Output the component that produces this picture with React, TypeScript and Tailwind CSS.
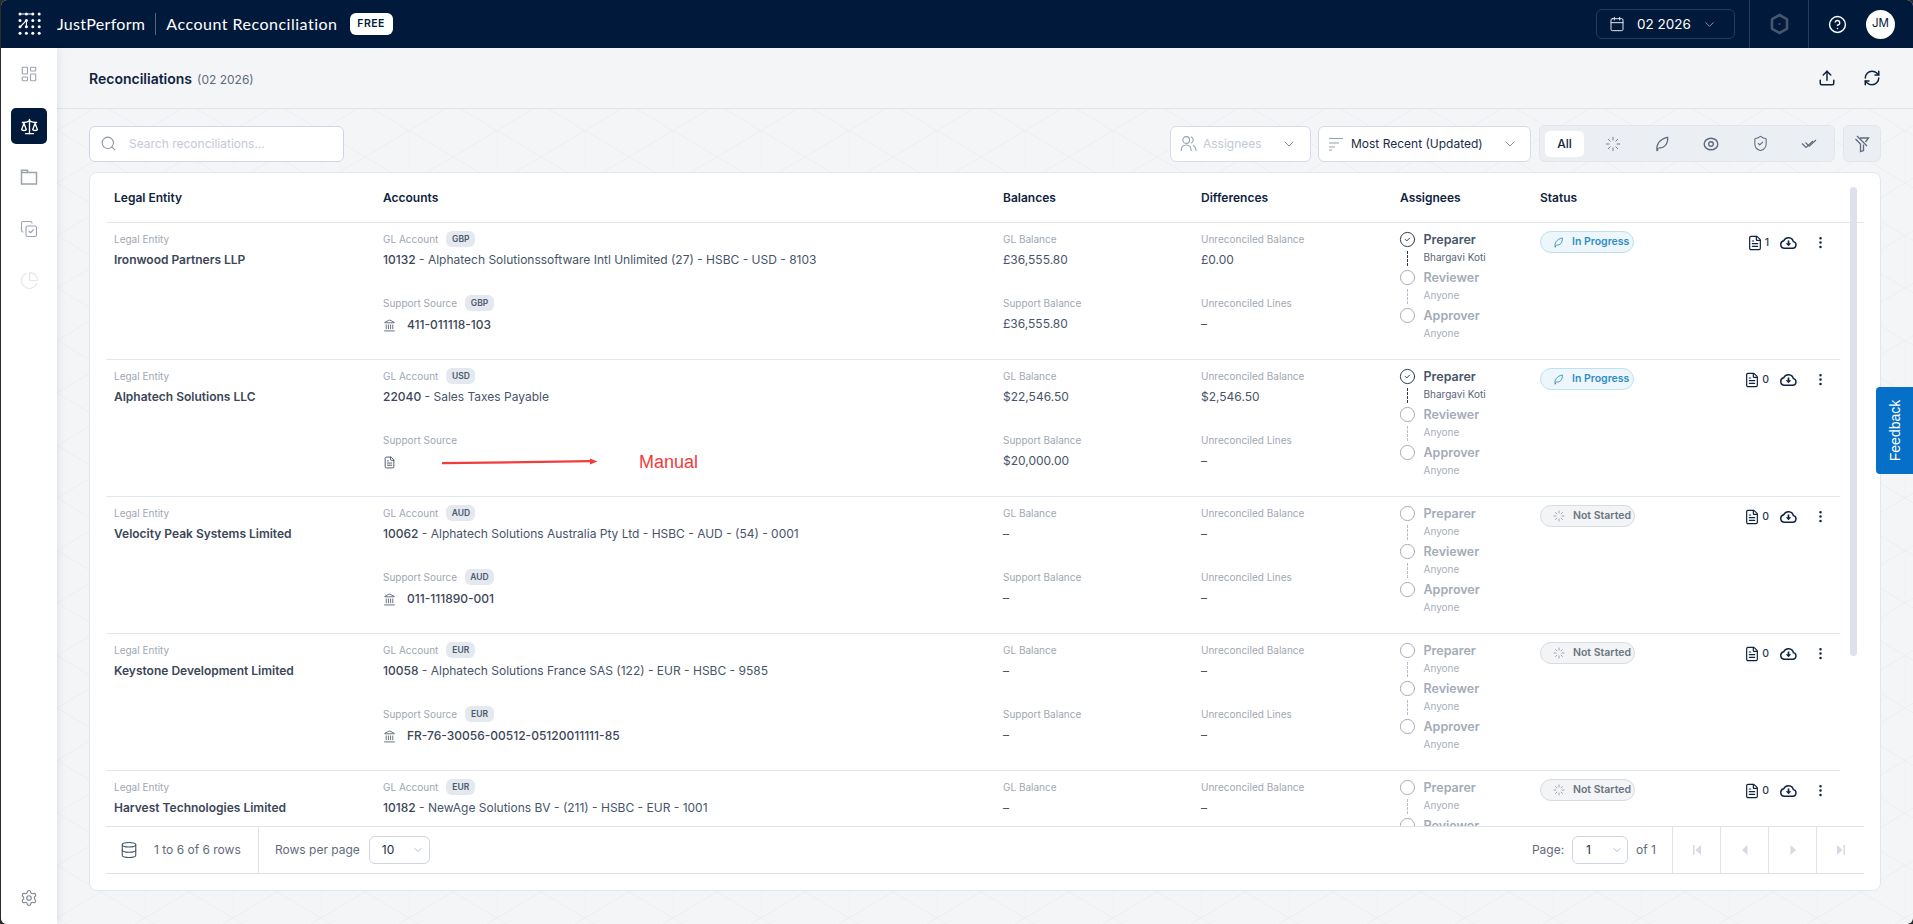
import {
  ChartPie,
  ChevronDown,
  CircleHelp,
  CopyCheck,
  Database,
  EllipsisVertical,
  FileText,
  Landmark,
  LayoutDashboard,
  Loader,
  RefreshCw,
  Scale,
  Search,
  Settings,
  ShieldCheck,
  Upload,
  Calendar,
  Circle,
  CircleCheck,
} from 'lucide-react';

const inter = { fontFamily: 'Inter, sans-serif' };

type Row = {
  entity: string;
  glCurrency: string;
  glCode: string;
  glName: string;
  sourceCurrency?: string;
  source?: string;
  glBalance: string;
  supportBalance: string;
  unreconciled: string;
  lines: string;
  started: boolean;
  docs: number;
};

const rows: Row[] = [
  {
    entity: 'Ironwood Partners LLP',
    glCurrency: 'GBP',
    glCode: '10132',
    glName: 'Alphatech Solutionssoftware Intl Unlimited (27) - HSBC - USD - 8103',
    sourceCurrency: 'GBP',
    source: '411-011118-103',
    glBalance: '£36,555.80',
    supportBalance: '£36,555.80',
    unreconciled: '£0.00',
    lines: '–',
    started: true,
    docs: 1,
  },
  {
    entity: 'Alphatech Solutions LLC',
    glCurrency: 'USD',
    glCode: '22040',
    glName: 'Sales Taxes Payable',
    glBalance: '$22,546.50',
    supportBalance: '$20,000.00',
    unreconciled: '$2,546.50',
    lines: '–',
    started: true,
    docs: 0,
  },
  {
    entity: 'Velocity Peak Systems Limited',
    glCurrency: 'AUD',
    glCode: '10062',
    glName: 'Alphatech Solutions Australia Pty Ltd - HSBC - AUD - (54) - 0001',
    sourceCurrency: 'AUD',
    source: '011-111890-001',
    glBalance: '–',
    supportBalance: '–',
    unreconciled: '–',
    lines: '–',
    started: false,
    docs: 0,
  },
  {
    entity: 'Keystone Development Limited',
    glCurrency: 'EUR',
    glCode: '10058',
    glName: 'Alphatech Solutions France SAS (122) - EUR - HSBC - 9585',
    sourceCurrency: 'EUR',
    source: 'FR-76-30056-00512-05120011111-85',
    glBalance: '–',
    supportBalance: '–',
    unreconciled: '–',
    lines: '–',
    started: false,
    docs: 0,
  },
  {
    entity: 'Harvest Technologies Limited',
    glCurrency: 'EUR',
    glCode: '10182',
    glName: 'NewAge Solutions BV - (211) - HSBC - EUR - 1001',
    sourceCurrency: 'EUR',
    source: 'NL-12-HSBC-0123456789',
    glBalance: '–',
    supportBalance: '–',
    unreconciled: '–',
    lines: '–',
    started: false,
    docs: 0,
  },
];

const columns = 'grid grid-cols-[277px_620px_198px_199px_140px_1fr]';

function LogoMark() {
  const dots = [];
  for (let y = 0; y < 4; y++) {
    for (let x = 0; x < 4; x++) {
      dots.push(<circle key={`${x}-${y}`} cx={2 + x * 6.4} cy={2 + y * 6.4} r="1.5" fill="#fff" />);
    }
  }
  return (
    <svg width="24" height="24" viewBox="0 0 24 24" className="shrink-0">
      {dots}
      <path d="M2 2H15M8.4 8.4L2 15M8.4 8.4V15" stroke="#fff" strokeWidth="1.1" fill="none" />
    </svg>
  );
}

function FolderIcon() {
  return (
    <svg width="18" height="18" viewBox="0 0 18 18" fill="none" stroke="#9ca3af" strokeWidth="1.5">
      <path d="M1.5 2.2H7.5V4.4H16.5V16H1.5Z" />
      <path d="M1.5 4.4H7.5" />
    </svg>
  );
}

function HexIcon() {
  return (
    <svg width="19" height="22" viewBox="0 0 19 22" fill="none" stroke="#47566e" strokeWidth="2.6">
      <path d="M9.5 2L17 6.2V15.8L9.5 20L2 15.8V6.2Z" />
      <circle cx="9.5" cy="11" r="1" fill="#47566e" stroke="none" />
    </svg>
  );
}

function UsersIcon() {
  return (
    <svg width="17" height="17" viewBox="0 0 17 17" fill="none" stroke="#94a0b2" strokeWidth="1.1">
      <circle cx="6.2" cy="5" r="3.4" />
      <path d="M1.2 16c0-4 2-6 5-6s5 2 5 6" />
      <path d="M11 1.8a3.4 3.4 0 0 1 0 6.4M13 10.4c2 .8 3 2.8 3 5.6" />
    </svg>
  );
}

function SortIcon() {
  return (
    <svg width="16" height="14" viewBox="0 0 16 14" fill="none" stroke="#94a0b2" strokeWidth="1.2">
      <path d="M1 1.5H15M1 6H11M1 10H7M1 13H4" />
    </svg>
  );
}

function LeafIcon({ color = '#5d6b80', size = 16 }: { color?: string; size?: number }) {
  return (
    <svg width={size} height={size} viewBox="0 0 16 16" fill="none" stroke={color} strokeWidth="1.3">
      <path d="M3.2 15c-.6-2.4-.5-5.4 1.2-8C6.2 4.2 9.6 2.2 13.6 1.4c.3 3-.5 6-2.2 8-1.8 2-4.2 2.8-6.8 2.2" />
      <path d="M3.4 15L4 12" />
    </svg>
  );
}

function EyeTargetIcon() {
  return (
    <svg width="16" height="14" viewBox="0 0 16 14" fill="none" stroke="#5d6b80" strokeWidth="1.4">
      <ellipse cx="8" cy="7" rx="6.8" ry="5.8" />
      <circle cx="8" cy="7" r="2.3" />
    </svg>
  );
}

function DoubleCheckIcon() {
  return (
    <svg width="16" height="12" viewBox="0 0 16 12" fill="none" stroke="#5d6b80" strokeWidth="1.2">
      <path d="M1 5.5L5 9.5L12 3" />
      <path d="M4.5 4.5L8.2 8.2L15 2" />
    </svg>
  );
}

function TiltedFilterIcon() {
  return (
    <svg width="16" height="18" viewBox="0 0 16 18" fill="none" stroke="#5d6b80" strokeWidth="1.3">
      <path d="M1.5 4L6.5 9V16.5L9.5 15.5V9.5" />
      <path d="M6 3H14.5L11.5 7M3 1L13 11" />
    </svg>
  );
}

function CloudDownloadIcon() {
  return (
    <svg width="17" height="17" viewBox="0 0 16 16">
      <path
        d="M4.2 13.5H12a3.2 3.2 0 0 0 .6-6.3A4.8 4.8 0 0 0 3.5 6.4a3.6 3.6 0 0 0 .7 7.1Z"
        fill="none"
        stroke="#0f2340"
        strokeWidth="1.4"
      />
      <path d="M7.2 6.2H8.8V8.8H10.6L8 11.6L5.4 8.8H7.2Z" fill="#0f2340" />
    </svg>
  );
}

function PageButton({ glyph }: { glyph: 'first' | 'prev' | 'next' | 'last' }) {
  const paths = {
    first: 'M3 2V12H4.5V2ZM11 2L5.5 7L11 12Z',
    prev: 'M9.5 2L4 7L9.5 12Z',
    next: 'M4.5 2L10 7L4.5 12Z',
    last: 'M11 2V12H9.5V2ZM3 2L8.5 7L3 12Z',
  };
  return (
    <div className="flex h-full w-[48px] items-center justify-center border-l border-[#dfe3ec]">
      <svg width="14" height="14" viewBox="0 0 14 14">
        <path d={paths[glyph]} fill="#d5dae5" />
      </svg>
    </div>
  );
}

function Label({ children }: { children: React.ReactNode }) {
  return <span className="block text-[10px] leading-[14px] text-[#a0a7b4]">{children}</span>;
}

function CurrencyTag({ code }: { code: string }) {
  return (
    <span className="flex h-[16px] w-[29px] items-center justify-center rounded-[6px] bg-[#e4e8ef] text-[8.5px] font-semibold text-[#4c5a6e]">
      {code}
    </span>
  );
}

function Person({
  label,
  name,
  done,
  last,
}: {
  label: string;
  name: string;
  done?: boolean;
  last?: boolean;
}) {
  return (
    <div className="relative flex h-[38px] items-start gap-[8px]">
      {done ? (
        <CircleCheck size={17} strokeWidth={1.4} color="#2b3950" className="-ml-[1.5px] shrink-0" />
      ) : (
        <Circle size={17} strokeWidth={1.4} color="#a4abb8" className="-ml-[1.5px] shrink-0" />
      )}
      {!last && (
        <span
          className={`absolute left-[7px] top-[20px] h-[15px] border-l border-dashed ${
            done ? 'border-[#2b3950]' : 'border-[#b8bec9]'
          }`}
        />
      )}
      <div className="flex flex-col">
        <span
          className={`text-[12.5px] font-semibold leading-[17px] ${done ? 'text-[#47546a]' : 'text-[#a4abb8]'}`}
        >
          {label}
        </span>
        <span className={`mt-[2px] text-[10px] leading-[14px] ${done ? 'text-[#5a6577]' : 'text-[#a8aeba]'}`}>
          {name}
        </span>
      </div>
    </div>
  );
}

function StatusPill({ started }: { started: boolean }) {
  if (started) {
    return (
      <span className="flex h-[22px] w-[94px] items-center gap-[8px] rounded-full border border-[#bfe0f3] bg-[#edf6fb] pl-[12px] text-[10.5px] font-semibold text-[#2f8ec6]">
        <LeafIcon color="#2f8ec6" size={11} />
        In Progress
      </span>
    );
  }
  return (
    <span className="flex h-[22px] w-[95px] items-center gap-[8px] rounded-full border border-[#d8dbe0] bg-[#f3f4f5] pl-[12px] text-[10.5px] font-semibold text-[#6b7482]">
      <Loader size={12} strokeWidth={1.6} color="#8b93a1" />
      Not Started
    </span>
  );
}

function TableRow({ row }: { row: Row }) {
  return (
    <div className={`${columns} h-[137px] shrink-0 border-b border-[#e2e6ee]`}>
      <div className="flex flex-col pl-[8px] pt-[9px]">
        <Label>Legal Entity</Label>
        <span className="mt-[6px] text-[12px] font-semibold leading-[16px] text-[#3b4658]">{row.entity}</span>
      </div>
      <div className="flex flex-col pt-[8px]">
        <div className="flex h-[16px] items-center gap-[8px]">
          <Label>GL Account</Label>
          <CurrencyTag code={row.glCurrency} />
        </div>
        <div className="mt-[5px] text-[12px] leading-[16px] text-[#47546a]">
          <span className="font-medium text-[#3b4658]">{row.glCode}</span> - {row.glName}
        </div>
        <div className="mt-[27px] flex h-[16px] items-center gap-[8px]">
          <Label>Support Source</Label>
          {row.sourceCurrency && <CurrencyTag code={row.sourceCurrency} />}
        </div>
        <div className="mt-[6px] flex h-[16px] items-center">
          {row.source ? (
            <>
              <Landmark size={13} strokeWidth={1.4} color="#3b4658" className="shrink-0" />
              <span className="ml-[11px] text-[12px] font-medium text-[#3b4658]">{row.source}</span>
            </>
          ) : (
            <>
              <FileText size={13} strokeWidth={1.6} color="#3b4658" className="shrink-0" />
              <svg width="156" height="8" viewBox="0 0 156 8" className="ml-[46px] shrink-0">
                <path d="M0 5.2L148 3.2" stroke="#f23b3b" strokeWidth="2.2" />
                <path d="M148 0.5L155.5 3.6L148 6.5Z" fill="#f23b3b" />
              </svg>
              <span
                className="ml-[41px] text-[18px] text-[#f23b3b]"
                style={{ fontFamily: '"Liberation Sans", sans-serif' }}
              >
                Manual
              </span>
            </>
          )}
        </div>
      </div>
      <div className="flex flex-col pt-[9px]">
        <Label>GL Balance</Label>
        <span className="mt-[6px] text-[12px] leading-[16px] text-[#47546a]">{row.glBalance}</span>
        <div className="mt-[28px]">
          <Label>Support Balance</Label>
        </div>
        <span className="mt-[6px] text-[12px] leading-[16px] text-[#47546a]">{row.supportBalance}</span>
      </div>
      <div className="flex flex-col pt-[9px]">
        <Label>Unreconciled Balance</Label>
        <span className="mt-[6px] text-[12px] leading-[16px] text-[#47546a]">{row.unreconciled}</span>
        <div className="mt-[28px]">
          <Label>Unreconciled Lines</Label>
        </div>
        <span className="mt-[6px] text-[12px] leading-[16px] text-[#47546a]">{row.lines}</span>
      </div>
      <div className="flex flex-col pt-[8px]">
        <Person label="Preparer" name={row.started ? 'Bhargavi Koti' : 'Anyone'} done={row.started} />
        <Person label="Reviewer" name="Anyone" />
        <Person label="Approver" name="Anyone" last />
      </div>
      <div className="flex items-start justify-between pt-[8px]">
        <StatusPill started={row.started} />
        <div className="mr-[12px] flex items-center pt-[3px]">
          <FileText size={16} strokeWidth={1.8} color="#0f2340" />
          <span className="ml-[2px] text-[10.5px] font-medium text-[#2b3950]">{row.docs}</span>
          <div className="ml-[11px]">
            <CloudDownloadIcon />
          </div>
          <EllipsisVertical size={15} strokeWidth={2} color="#0f2340" className="ml-[16px]" />
        </div>
      </div>
    </div>
  );
}

function HeaderCell({ children }: { children: React.ReactNode }) {
  return <span className="block text-[12px] font-semibold text-[#0f2340]">{children}</span>;
}

export default function App() {
  return (
    <div className="h-screen overflow-hidden bg-[#2b2b2b] pl-px" style={inter}>
      <div className="relative flex h-full flex-col overflow-hidden rounded-[6px] bg-[#f4f5f7]">
        <header className="flex h-[48px] shrink-0 items-center bg-[#01193a] pl-[17px] text-white">
          <LogoMark />
          <span className="ml-[15px] text-[16px] tracking-[0.3px]" style={{ fontFamily: 'Lato, sans-serif' }}>
            JustPerform
          </span>
          <span className="ml-[10px] h-[22px] w-px bg-[#55647c]" />
          <span className="ml-[10px] text-[16px] tracking-[0.5px]" style={{ fontFamily: 'Lato, sans-serif' }}>
            Account Reconciliation
          </span>
          <span className="ml-[12px] flex h-[22px] w-[43px] items-center justify-center rounded-[6px] bg-white text-[10.5px] font-semibold tracking-[0.4px] text-[#01193a]">
            FREE
          </span>
          <div className="ml-auto flex h-full items-center">
            <div className="flex h-[30px] w-[139px] items-center rounded-[6px] border border-[#2a3b57] pl-[12px]">
              <Calendar size={16} strokeWidth={1.5} color="#e5e7eb" />
              <span className="ml-[12px] text-[13.5px]">02 2026</span>
              <ChevronDown size={15} strokeWidth={1.4} color="#94a0b2" className="ml-[11px]" />
            </div>
            <div className="ml-[14px] flex h-full w-[60px] items-center justify-center border-x border-[#2a3b57]">
              <HexIcon />
            </div>
            <div className="flex w-[57px] justify-center">
              <CircleHelp size={19} strokeWidth={1.8} color="#fff" />
            </div>
            <div className="mr-[18px] flex h-[29px] w-[29px] items-center justify-center rounded-full bg-white text-[11.5px] text-[#01193a]">
              JM
            </div>
          </div>
        </header>

        <div className="flex min-h-0 flex-1">
          <aside className="z-10 flex w-[56px] shrink-0 flex-col items-center bg-white pt-[17px] shadow-[2px_0_8px_rgba(15,35,64,0.08)]">
            <LayoutDashboard size={18} strokeWidth={1.5} color="#9ca3af" />
            <div className="mt-[25px] flex h-[36px] w-[36px] items-center justify-center rounded-[5px] bg-[#01193a]">
              <Scale size={19} strokeWidth={1.7} color="#fff" />
            </div>
            <div className="mt-[24px] flex">
              <FolderIcon />
            </div>
            <CopyCheck size={18} strokeWidth={1.5} color="#9ca3af" className="mt-[34px]" />
            <ChartPie size={19} strokeWidth={1.4} color="#e2e5ea" className="mt-[33px]" />
            <Settings size={18} strokeWidth={1.5} color="#7d8694" className="mt-auto mb-[17px]" />
          </aside>

          <main className="relative flex min-w-0 flex-1 flex-col">
            <svg className="absolute inset-0 h-full w-full" aria-hidden="true">
              <defs>
                <pattern
                  id="mesh"
                  width="88"
                  height="105"
                  patternUnits="userSpaceOnUse"
                  patternTransform="translate(0 30)"
                >
                  <path
                    d="M0 0L88 52.5M0 52.5L88 105M0 -52.5L88 0M0 0L88 -52.5M0 52.5L88 0M0 105L88 52.5M0 52.5V105"
                    stroke="#eceef2"
                    strokeWidth="1"
                    fill="none"
                  />
                </pattern>
              </defs>
              <rect width="100%" height="100%" fill="url(#mesh)" />
            </svg>

            <div className="relative flex h-[61px] shrink-0 items-center justify-between border-b border-[#dfe3ec] bg-[#f4f5f7] pl-[32px] pr-[32px]">
              <div className="flex items-baseline gap-[5px]">
                <span className="text-[14px] font-semibold text-[#0f2340]">Reconciliations</span>
                <span className="text-[12px] text-[#5f6b7d]">(02 2026)</span>
              </div>
              <div className="flex items-center gap-[27px]">
                <Upload size={18} strokeWidth={2} color="#0f2340" />
                <RefreshCw size={18} strokeWidth={2} color="#0f2340" />
              </div>
            </div>

            <div className="relative flex min-h-0 flex-1 flex-col pb-[33px] pl-[32px] pr-[32px] pt-[16px]">
              <div className="flex h-[37px] shrink-0 items-center">
                <div className="flex h-[36px] w-[255px] items-center rounded-[6px] border border-[#cfd5e2] bg-white pl-[10px]">
                  <Search size={17} strokeWidth={1.5} color="#8c97a8" />
                  <span className="ml-[12px] text-[12px] text-[#c3c9d6]">Search reconciliations...</span>
                </div>
                <div className="ml-auto flex h-[36px] w-[141px] items-center rounded-[6px] border border-[#d6dbe6] bg-white pl-[9px]">
                  <UsersIcon />
                  <span className="ml-[6px] text-[12px] text-[#c3c9d6]">Assignees</span>
                  <ChevronDown size={16} strokeWidth={1.4} color="#7d8694" className="ml-[19px]" />
                </div>
                <div className="ml-[7px] flex h-[36px] w-[213px] items-center rounded-[6px] border border-[#d6dbe6] bg-white pl-[9px]">
                  <SortIcon />
                  <span className="ml-[7px] text-[12px] text-[#1c2c47]">Most Recent (Updated)</span>
                  <ChevronDown size={16} strokeWidth={1.4} color="#7d8694" className="ml-[19px]" />
                </div>
                <div className="ml-[8px] flex h-[37px] w-[296px] items-center rounded-[6px] border border-[#e2e5eb] bg-[#ebeef2] pl-[5px]">
                  <span className="flex h-[26px] w-[39px] items-center justify-center rounded-[5px] bg-white text-[12px] font-medium text-[#0f2340]">
                    All
                  </span>
                  <div className="flex w-[49px] justify-center pl-[9px]">
                    <Loader size={16} strokeWidth={1.3} color="#5d6b80" />
                  </div>
                  <div className="ml-[9px] flex w-[40px] justify-center">
                    <LeafIcon />
                  </div>
                  <div className="ml-[9px] flex w-[40px] justify-center">
                    <EyeTargetIcon />
                  </div>
                  <div className="ml-[9px] flex w-[40px] justify-center">
                    <ShieldCheck size={17} strokeWidth={1.5} color="#5d6b80" />
                  </div>
                  <div className="ml-[9px] flex w-[40px] justify-center">
                    <DoubleCheckIcon />
                  </div>
                </div>
                <div className="ml-[8px] flex h-[37px] w-[38px] items-center justify-center rounded-[6px] border border-[#e2e5eb] bg-[#ebeef2]">
                  <TiltedFilterIcon />
                </div>
              </div>

              <div className="mt-[10px] flex min-h-0 flex-1 flex-col rounded-[8px] border border-[#e2e6ee] bg-white px-[16px] pb-[16px]">
                <div className="relative flex min-h-0 flex-1 flex-col overflow-hidden">
                  <div className={`${columns} h-[50px] shrink-0 items-center border-b border-[#e2e6ee] pr-[24px]`}>
                    <div className="pl-[8px]">
                      <HeaderCell>Legal Entity</HeaderCell>
                    </div>
                    <HeaderCell>Accounts</HeaderCell>
                    <HeaderCell>Balances</HeaderCell>
                    <HeaderCell>Differences</HeaderCell>
                    <HeaderCell>Assignees</HeaderCell>
                    <HeaderCell>Status</HeaderCell>
                  </div>
                  <div className="flex min-h-0 flex-1 flex-col overflow-hidden pr-[24px]">
                    {rows.map((row) => (
                      <TableRow key={row.entity} row={row} />
                    ))}
                  </div>
                  <div className="absolute right-[7px] top-[14px] h-[469px] w-[7px] rounded-full bg-[#dde1ea]" />
                </div>

                <div className="flex h-[48px] shrink-0 items-center border-y border-[#dfe3ec] text-[12px] text-[#5f6b7d]">
                  <div className="flex h-full w-[153px] items-center border-r border-[#dfe3ec] pl-[14px]">
                    <Database size={18} strokeWidth={1.5} color="#47546a" />
                    <span className="ml-[16px]">1 to 6 of 6 rows</span>
                  </div>
                  <span className="ml-[16px]">Rows per page</span>
                  <div className="ml-[9px] flex h-[28px] w-[61px] items-center rounded-[6px] border border-[#cfd5e2] pl-[12px] text-[#1c2c47]">
                    10
                    <ChevronDown size={12} strokeWidth={1.4} color="#94a0b2" className="ml-[18px]" />
                  </div>
                  <span className="ml-auto">Page:</span>
                  <div className="ml-[8px] flex h-[28px] w-[56px] items-center rounded-[6px] border border-[#cfd5e2] pl-[13px] text-[#1c2c47]">
                    1
                    <ChevronDown size={12} strokeWidth={1.4} color="#94a0b2" className="ml-[20px]" />
                  </div>
                  <span className="ml-[8px] mr-[16px]">of 1</span>
                  <PageButton glyph="first" />
                  <PageButton glyph="prev" />
                  <PageButton glyph="next" />
                  <PageButton glyph="last" />
                </div>
              </div>
            </div>

            <div className="absolute right-0 top-[339px] flex h-[87px] w-[37px] items-center justify-center rounded-l-[4px] bg-[#0670c8] pl-[3px]">
              <span
                className="-rotate-90 text-[14px] text-white"
                style={{ fontFamily: '"Liberation Sans", sans-serif' }}
              >
                Feedback
              </span>
            </div>
          </main>
        </div>
      </div>
    </div>
  );
}
